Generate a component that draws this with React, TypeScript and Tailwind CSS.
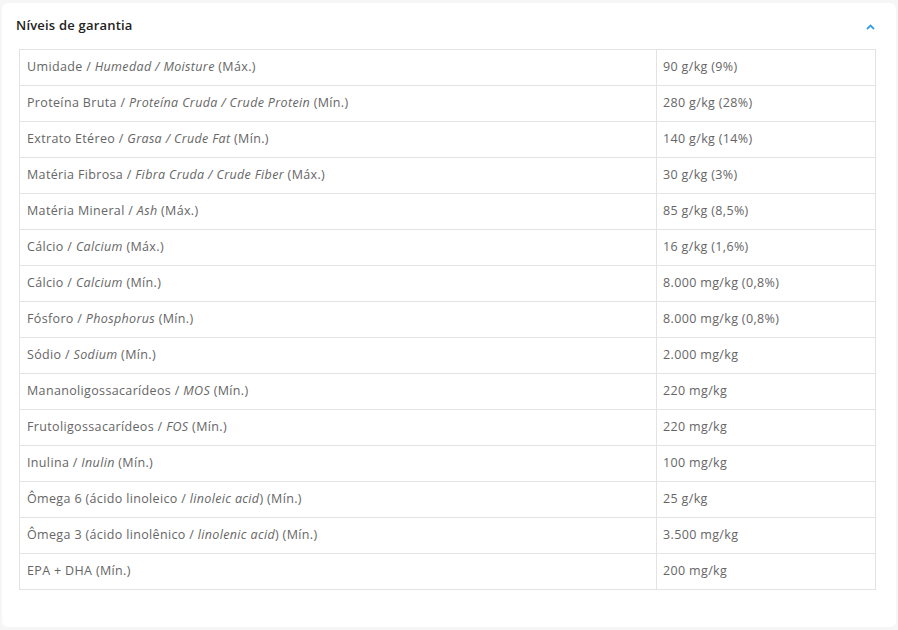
import React from "react";

type Row = { label: React.ReactNode; value: string };

const rows: Row[] = [
  { label: <>Umidade / <i>Humedad / Moisture</i> (Máx.)</>, value: "90 g/kg (9%)" },
  { label: <>Proteína Bruta / <i>Proteína Cruda / Crude Protein</i> (Mín.)</>, value: "280 g/kg (28%)" },
  { label: <>Extrato Etéreo / <i>Grasa / Crude Fat</i> (Mín.)</>, value: "140 g/kg (14%)" },
  { label: <>Matéria Fibrosa / <i>Fibra Cruda / Crude Fiber</i> (Máx.)</>, value: "30 g/kg (3%)" },
  { label: <>Matéria Mineral / <i>Ash</i> (Máx.)</>, value: "85 g/kg (8,5%)" },
  { label: <>Cálcio / <i>Calcium</i> (Máx.)</>, value: "16 g/kg (1,6%)" },
  { label: <>Cálcio / <i>Calcium</i> (Mín.)</>, value: "8.000 mg/kg (0,8%)" },
  { label: <>Fósforo / <i>Phosphorus</i> (Mín.)</>, value: "8.000 mg/kg (0,8%)" },
  { label: <>Sódio / <i>Sodium</i> (Mín.)</>, value: "2.000 mg/kg" },
  { label: <>Mananoligossacarídeos / <i>MOS</i> (Mín.)</>, value: "220 mg/kg" },
  { label: <>Frutoligossacarídeos / <i>FOS</i> (Mín.)</>, value: "220 mg/kg" },
  { label: <>Inulina / <i>Inulin</i> (Mín.)</>, value: "100 mg/kg" },
  { label: <>Ômega 6 (ácido linoleico / <i>linoleic acid</i>) (Mín.)</>, value: "25 g/kg" },
  { label: <>Ômega 3 (ácido linolênico / <i>linolenic acid</i>) (Mín.)</>, value: "3.500 mg/kg" },
  { label: <>EPA + DHA (Mín.)</>, value: "200 mg/kg" },
];

export default function App() {
  return (
    <div className="min-h-[630px] w-[898px] bg-[#f6f6f6] px-[2px] pt-[3px] font-['Open_Sans',sans-serif]">
      <div className="h-[624px] rounded-[6px] bg-white px-[17px]">
        {/* Header */}
        <div className="flex h-[46px] items-center justify-between">
          <h3 className="-ml-[3px] pb-[1px] text-[13px] font-semibold tracking-[0.2px] text-[#222]">Níveis de garantia</h3>
          <svg width="9" height="6" viewBox="0 0 9 6" className="mr-[4px] mt-[1px]">
            <path d="M1 5 L4.5 1.5 L8 5" fill="none" stroke="#3a9ee4" strokeWidth="1.8" />
          </svg>
        </div>

        {/* Table */}
        <table className="w-[857px] border-collapse text-[12.5px] tracking-[0.35px] text-[#666]">
          <tbody>
            {rows.map((r, i) => (
              <tr key={i} className="h-[36px]">
                <td className="w-[637px] border border-[#e3e3e3] px-[7px] pb-[1px] align-middle">{r.label}</td>
                <td className="border border-[#e3e3e3] px-[6px] pb-[1px] align-middle">{r.value}</td>
              </tr>
            ))}
          </tbody>
        </table>
      </div>
    </div>
  );
}
